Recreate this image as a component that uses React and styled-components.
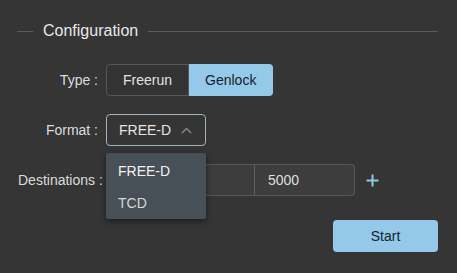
import React from 'react';
import styled, { createGlobalStyle } from 'styled-components';

const Global = createGlobalStyle`
  html, body { margin: 0; padding: 0; background: #353535; }
  body { font-family: "Liberation Sans", Arial, sans-serif; }
  * { box-sizing: border-box; }
`;

const Page = styled.div`
  width: 457px;
  height: 273px;
  padding: 22px 19px 0 17px;
  background: #353535;
  overflow: hidden;
`;

const Legend = styled.div`
  display: flex;
  align-items: center;
  gap: 10px;
  height: 18px;
`;

const Line = styled.div`
  height: 1px;
  background: #5c5c5c;
  flex: ${(p) => (p.$grow ? '1 1 auto' : '0 0 16px')};
`;

const LegendText = styled.span`
  font-size: 16px;
  line-height: 18px;
  color: #e8e8e8;
  white-space: nowrap;
`;

const Form = styled.div`
  display: grid;
  grid-template-columns: 80px auto;
  column-gap: 8px;
  row-gap: 18px;
  align-items: center;
  justify-items: start;
  margin: 24px 0 0 1px;
`;

const Label = styled.label`
  width: 80px;
  text-align: right;
  white-space: nowrap;
  font-size: 14px;
  color: #dcdcdc;
  &::after { content: ' :'; }
`;

const Group = styled.div`
  display: flex;
`;

const Segment = styled.button`
  height: 32px;
  padding: 0 16px;
  font: inherit;
  font-size: 14px;
  cursor: pointer;
  border: 1px solid ${(p) => (p.$active ? '#94c9ea' : '#575757')};
  background: ${(p) => (p.$active ? '#94c9ea' : '#333333')};
  color: ${(p) => (p.$active ? '#14222e' : '#e2e2e2')};
  & + & { border-left: 0; }
  &:first-child { border-radius: 4px 0 0 4px; }
  &:last-child { border-radius: 0 4px 4px 0; }
`;

const SelectWrap = styled.div`
  position: relative;
`;

const SelectBox = styled.div`
  width: 100px;
  height: 32px;
  padding: 0 13px 0 12px;
  display: flex;
  align-items: center;
  justify-content: space-between;
  border: 1px solid #a3b3bb;
  border-radius: 4px;
  background: #353535;
  font-size: 14px;
  color: #e4e4e4;
`;

const Menu = styled.ul`
  position: absolute;
  top: 39px;
  left: 0;
  width: 100px;
  margin: 0;
  padding: 2px 0 0;
  list-style: none;
  background: #465056;
  border-radius: 2px;
  box-shadow: 0 2px 6px rgba(0, 0, 0, 0.55);
  z-index: 2;
`;

const MenuItem = styled.li`
  height: 32px;
  line-height: 32px;
  padding-left: 12px;
  font-size: 14px;
  color: ${(p) => (p.$selected ? '#f2f2f2' : '#d6d8da')};
`;

const DestRow = styled.div`
  display: flex;
  align-items: center;
`;

const Inputs = styled.div`
  display: flex;
`;

const Input = styled.input`
  width: ${(p) => p.$w}px;
  height: 32px;
  padding: 0 13px;
  font: inherit;
  font-size: 14px;
  color: #dedede;
  background: #3d3d3d;
  border: 1px solid #585858;
  outline: none;
  & + & { border-left: 1px solid #5e5e5e; margin-left: -1px; }
  &:first-child { border-radius: 4px 0 0 4px; }
  &:last-child { border-radius: 0 4px 4px 0; }
`;

const AddButton = styled.button`
  margin-left: 10px;
  width: 14px;
  height: 14px;
  padding: 0;
  border: 0;
  background: transparent;
  display: flex;
  align-items: center;
  justify-content: center;
  cursor: pointer;
`;

const Actions = styled.div`
  display: flex;
  justify-content: flex-end;
  margin-top: 24px;
`;

const Primary = styled.button`
  width: 105px;
  height: 32px;
  border: 0;
  border-radius: 4px;
  background: #94c9ea;
  color: #14222e;
  font: inherit;
  font-size: 14px;
  cursor: pointer;
`;

export default function App() {
  return (
    <>
      <Global />
      <Page>
        <Legend>
          <Line />
          <LegendText>Configuration</LegendText>
          <Line $grow />
        </Legend>
        <Form>
          <Label>Type</Label>
          <Group>
            <Segment>Freerun</Segment>
            <Segment $active>Genlock</Segment>
          </Group>

          <Label>Format</Label>
          <SelectWrap>
            <SelectBox>
              <span>FREE-D</span>
              <svg width="11" height="7" viewBox="0 0 11 7" fill="none">
                <path d="M1 6 L5.5 1.5 L10 6" stroke="#8c8c8c" strokeWidth="1.3" />
              </svg>
            </SelectBox>
            <Menu>
              <MenuItem $selected>FREE-D</MenuItem>
              <MenuItem>TCD</MenuItem>
            </Menu>
          </SelectWrap>

          <Label>Destinations</Label>
          <DestRow>
            <Inputs>
              <Input $w={149} defaultValue="" />
              <Input $w={101} defaultValue="5000" />
            </Inputs>
            <AddButton aria-label="add">
              <svg width="13" height="13" viewBox="0 0 13 13">
                <path d="M6.5 0.5 V12.5 M0.5 6.5 H12.5" stroke="#8fc8ea" strokeWidth="2" />
              </svg>
            </AddButton>
          </DestRow>
        </Form>
        <Actions>
          <Primary>Start</Primary>
        </Actions>
      </Page>
    </>
  );
}
